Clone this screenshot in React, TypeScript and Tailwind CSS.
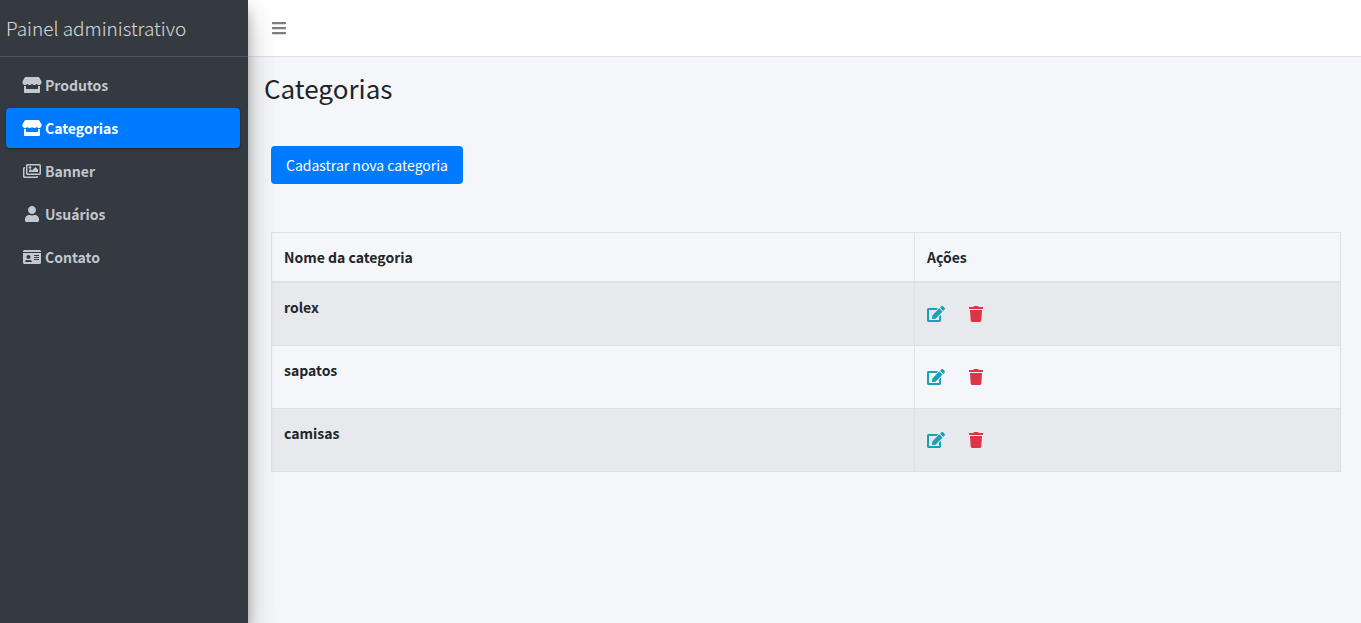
import type { IconType } from 'react-icons';
import { FaBars, FaEdit, FaIdCard, FaRegImages, FaStore, FaTrash, FaUser } from 'react-icons/fa';

type NavItem = { label: string; icon: IconType; iconWidth: string; active?: boolean };

const navItems: NavItem[] = [
  { label: 'Produtos', icon: FaStore, iconWidth: 'w-5' },
  { label: 'Categorias', icon: FaStore, iconWidth: 'w-5', active: true },
  { label: 'Banner', icon: FaRegImages, iconWidth: 'w-[18px]' },
  { label: 'Usuários', icon: FaUser, iconWidth: 'w-3.5' },
  { label: 'Contato', icon: FaIdCard, iconWidth: 'w-[18px]' },
];

const categories = ['rolex', 'sapatos', 'camisas'];

function Sidebar() {
  return (
    <aside className="relative z-10 w-62 shrink-0 bg-[#343a40] shadow-[0_14px_28px_rgba(0,0,0,0.25),0_10px_10px_rgba(0,0,0,0.22)]">
      <a
        href="#"
        className="flex h-[57px] items-center border-b border-[#4b545c] px-1.5 text-[19px] font-light text-white/80"
      >
        Painel administrativo
      </a>
      <nav className="flex flex-col gap-[3px] px-1.5 py-2 pr-2">
        {navItems.map(({ label, icon: Icon, iconWidth, active }) => (
          <a
            key={label}
            href="#"
            className={
              active
                ? 'flex h-10 items-center gap-[3px] rounded bg-[#007bff] px-4 text-sm font-bold text-white shadow-[0_1px_3px_rgba(0,0,0,0.12),0_1px_2px_rgba(0,0,0,0.24)]'
                : 'flex h-10 items-center gap-[3px] rounded px-4 text-sm font-bold text-[#c2c7d0]'
            }
          >
            <span className="flex w-5 justify-center">
              <Icon className={`h-4 ${iconWidth}`} aria-hidden="true" />
            </span>
            {label}
          </a>
        ))}
      </nav>
    </aside>
  );
}

export default function App() {
  return (
    <div className="flex min-h-screen bg-[#f4f6f9] font-['Noto_Sans_CJK_SC',sans-serif] text-[#212529]">
      <Sidebar />
      <div className="min-w-0 flex-1">
        <header className="flex h-[57px] items-center border-b border-[#dee2e6] bg-white px-6">
          <button type="button" aria-label="Menu" className="text-black/50">
            <FaBars className="h-4 w-3.5" aria-hidden="true" />
          </button>
        </header>
        <main className="pt-[15px] pr-5 pl-4">
          <h1 className="text-[26px] leading-8">Categorias</h1>
          <div className="pt-[42px] pl-[7px]">
            <button type="button" className="h-[38px] w-48 rounded bg-[#007bff] text-sm text-white">
              Cadastrar nova categoria
            </button>
            <table className="mt-12 w-full table-fixed border-collapse border border-[#dee2e6] text-left text-sm">
              <thead>
                <tr className="h-[49px]">
                  <th className="w-[60.15%] border border-b-2 border-[#dee2e6] px-3 font-bold">Nome da categoria</th>
                  <th className="border border-b-2 border-[#dee2e6] px-3 font-bold">Ações</th>
                </tr>
              </thead>
              <tbody>
                {categories.map((name) => (
                  <tr key={name} className="h-[63px] odd:bg-black/5 first:h-16">
                    <th scope="row" className="border border-[#dee2e6] px-3 py-3 align-top leading-6 font-bold">
                      {name}
                    </th>
                    <td className="border border-[#dee2e6] px-3">
                      <div className="flex items-center gap-6">
                        <button type="button" aria-label="Editar" className="text-[#17a2b8]">
                          <FaEdit className="h-4 w-[18px]" aria-hidden="true" />
                        </button>
                        <button type="button" aria-label="Excluir" className="text-[#dc3545]">
                          <FaTrash className="h-4 w-3.5" aria-hidden="true" />
                        </button>
                      </div>
                    </td>
                  </tr>
                ))}
              </tbody>
            </table>
          </div>
        </main>
      </div>
    </div>
  );
}
